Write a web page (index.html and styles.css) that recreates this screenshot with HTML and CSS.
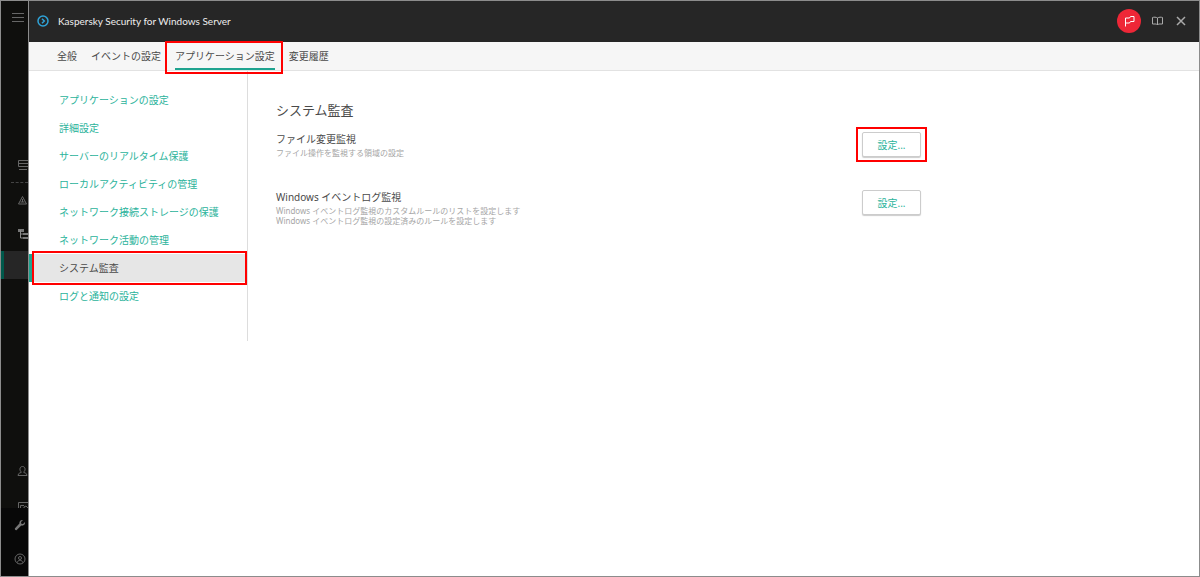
FILE: index.html
```html
<!DOCTYPE html>
<html lang="ja">

<head>
    <meta charset="utf-8">
    <meta name="viewport" content="width=device-width, initial-scale=1.0">
    <title>Kaspersky Security for Windows Server</title>
    <link rel="stylesheet" href="styles.css">
</head>

<body>
    <aside class="rail">
        <button class="rail-menu" aria-label="メニュー">
            <svg width="12" height="10" viewBox="0 0 12 10"><path d="M0 1.500h12M0 5.500h12M0 9.500h12" /></svg>
        </button>
        <div class="rail-top">
            <a href="#" aria-label="サーバー">
                <svg width="12" height="12" viewBox="0 0 12 12"><path d="M2.500 1.500h10v6h-10zM2 4.500h10M3 10.500h8" /></svg>
            </a>
            <hr>
            <a href="#" aria-label="警告">
                <svg width="12" height="12" viewBox="0 0 12 12"><path d="M6.500 2.500L10.500 10H2.500zM6.500 5v3M4.500 8h4" /></svg>
            </a>
            <a href="#" aria-label="デバイス">
                <svg class="bright" width="12" height="12" viewBox="0 0 12 12"><path class="fill" d="M2 1h6v3H2zM7 5h6v2H7zM7 9h6v2H7z" /><path d="M4.500 2v8H7M4.500 6H7" /></svg>
            </a>
            <a href="#" class="rail-active" aria-label="ポリシー"></a>
        </div>
        <div class="rail-users">
            <a href="#" aria-label="ユーザー">
                <svg width="12" height="12" viewBox="0 0 12 12"><path d="M6.500 1.500c3.500 0 3 5 1 5.500 0 1 3.500.5 3.500 3.500H2C2 7.500 5.500 8 5.500 7 3.500 6.500 3 1.500 6.500 1.500z" /></svg>
            </a>
            <a href="#" class="rail-cut" aria-label="レポート">
                <svg width="12" height="12" viewBox="0 0 12 12"><path d="M2.500 10V2.500H12M4.500 10V5.500H8M8 10V7l2-1 2 2" /></svg>
            </a>
        </div>
        <div class="rail-bottom">
            <a href="#" aria-label="設定">
                <svg width="12" height="12" viewBox="0 0 12 12"><path class="fill" d="M11 3L9 5 7.300 4.700 7 3l2-2C7 .5 5 2 5.400 4.600L1 9.300C.3 10.200 1.700 11.700 2.700 11l4.600-4.400C10 7 11.500 5 11 3z" /></svg>
            </a>
            <a href="#" aria-label="アカウント">
                <svg width="12" height="12" viewBox="0 0 12 12"><circle cx="6" cy="6" r="5" /><circle cx="6" cy="5" r="1.500" /><path d="M3.500 9.500C3.500 6.500 8.500 6.500 8.500 9.500" /></svg>
            </a>
        </div>
    </aside>

    <div class="panel">
        <header>
            <svg class="logo" width="12" height="12" viewBox="0 0 12 12"><circle cx="6" cy="6" r="5" /><path d="M5 3.800L7.300 6 5 8.200" /></svg>
            <h1>Kaspersky Security for Windows Server</h1>
            <button class="flag" aria-label="フラグ">
                <svg width="12" height="12" viewBox="0 0 12 12"><path d="M2.500 11.500V3h4l1-1.500h3.500v5H7.500L6.500 8h-4" /></svg>
            </button>
            <button class="tool" aria-label="ヘルプ">
                <svg width="12" height="12" viewBox="0 0 12 12"><path d="M6.500 3C5 2 3 2 1.500 2.500V9H5.500l1 1 1-1h4V2.500C10 2 8 2 6.500 3zM6.500 3v7" /></svg>
            </button>
            <button class="tool close" aria-label="閉じる">
                <svg width="12" height="12" viewBox="0 0 12 12"><path d="M2 2l8 8M10 2l-8 8" /></svg>
            </button>
        </header>

        <nav class="tabs">
            <a href="#">全般</a>
            <a href="#">イベントの設定</a>
            <a href="#" class="selected marked">アプリケーション設定</a>
            <a href="#">変更履歴</a>
        </nav>

        <div class="content">
            <nav class="menu">
                <a href="#">アプリケーションの設定</a>
                <a href="#">詳細設定</a>
                <a href="#">サーバーのリアルタイム保護</a>
                <a href="#">ローカルアクティビティの管理</a>
                <a href="#">ネットワーク接続ストレージの保護</a>
                <a href="#">ネットワーク活動の管理</a>
                <a href="#" class="selected marked">システム監査</a>
                <a href="#">ログと通知の設定</a>
            </nav>

            <main>
                <h2>システム監査</h2>
                <section class="setting">
                    <div>
                        <h3>ファイル変更監視</h3>
                        <p>ファイル操作を監視する領域の設定</p>
                    </div>
                    <button class="marked">設定...</button>
                </section>
                <section class="setting">
                    <div>
                        <h3>Windows イベントログ監視</h3>
                        <p>Windows イベントログ監視のカスタムルールのリストを設定します</p>
                        <p>Windows イベントログ監視の設定済みのルールを設定します</p>
                    </div>
                    <button>設定...</button>
                </section>
            </main>
        </div>
    </div>
</body>

</html>
```

FILE: styles.css
```css
* {
    box-sizing: border-box;
}

body {
    margin: 0;
    min-height: 100vh;
    display: flex;
    border: 1px solid #8c8c8c;
    background-color: white;
    color: #4a4a4a;
    font-family: "Noto Sans", "Noto Sans CJK JP", sans-serif;
    font-size: 10px;
    line-height: 16px;
}

h1, h2, h3, p {
    margin: 0;
    font-weight: 400;
}

a {
    text-decoration: none;
}

button {
    font: inherit;
    padding: 0;
    border: 0;
    background: none;
}

svg {
    display: block;
    flex: none;
    fill: none;
    stroke: #666666;
}

/* dark rail, partly covered by the panel */
.rail {
    width: 28px;
    flex: none;
    display: flex;
    flex-direction: column;
    overflow: hidden;
    background-color: #0f0f0d;
    border-right: 1px solid #8c8c8c;
}

.rail a {
    display: flex;
    align-items: center;
    height: 34px;
    padding-left: 15px;
}

.rail-menu {
    padding: 11px 0 0 11px;
}

.rail-top {
    margin-top: 126px;
}

.rail-top hr {
    margin: 0 0 0 10px;
    border: 0;
    border-top: 1px dashed #444444;
}

.rail .bright {
    stroke: #8c8c8c;
}

.rail .rail-active {
    height: 28px;
    background-color: #262626;
    border-left: 3px solid #00594b;
}

.rail-users {
    margin-top: auto;
}

.rail .rail-cut {
    height: 20px;
    align-items: flex-end;
    overflow: hidden;
}

.rail-cut svg {
    margin-bottom: -4px;
}

.rail-bottom {
    background-color: #080808;
}

.rail-bottom a {
    padding-left: 13px;
}

.fill {
    fill: #777777;
    stroke: none;
}

.panel {
    flex: 1;
    min-width: 0;
}

header {
    display: flex;
    align-items: center;
    height: 41px;
    padding: 0 12px 2px 8px;
    background-color: #262626;
    color: #eeeeee;
}

.logo {
    stroke: #2fa3d8;
    stroke-width: 1.5;
    margin-right: 9px;
}

h1 {
    font-family: Lato, sans-serif;
    font-size: 10px;
    margin-right: auto;
}

.flag {
    display: grid;
    place-items: center;
    width: 24px;
    height: 24px;
    margin-right: 10px;
    border-radius: 50%;
    background-color: #ee2737;
}

.flag svg {
    stroke: white;
}

.tool {
    margin-right: 12px;
}

.tool svg {
    stroke: #aaaaaa;
}

.close {
    margin-right: 0;
}

.close svg {
    stroke-width: 1.5;
}

.tabs {
    display: flex;
    gap: 14px;
    height: 29px;
    padding-left: 28px;
    background-color: #f6f6f6;
    border-bottom: 1px solid #e2e2e2;
}

.tabs a {
    height: 28px;
    line-height: 28px;
    color: #4a4a4a;
}

.tabs .selected {
    border-bottom: 2px solid #1fa38f;
}

/* red frames round the steps to follow */
.marked {
    position: relative;
}

.marked::after {
    content: "";
    position: absolute;
    z-index: 1;
    border: 2px solid #ff0000;
}

.tabs .marked::after {
    inset: -1px -8px -6px -10px;
}

.content {
    display: flex;
}

.menu {
    width: 219px;
    flex: none;
    padding: 15px 0 31px;
    border-right: 1px solid #dddddd;
}

.menu a {
    display: block;
    height: 28px;
    padding-left: 30px;
    line-height: 28px;
    color: #2bb39b;
}

.menu .selected {
    color: #4a4a4a;
    background-color: #e6e6e6;
    border-left: 3px solid #1fa38f;
    padding-left: 27px;
}

.menu .marked::after {
    inset: -3px 0;
}

main {
    flex: 1;
    max-width: 673px;
    padding: 29px 0 0 28px;
}

h2 {
    font-size: 13px;
    line-height: 20px;
    margin-bottom: 12px;
}

.setting {
    display: flex;
    align-items: flex-start;
    justify-content: space-between;
    min-height: 58px;
}

h3 {
    font-size: 10px;
    line-height: 14px;
    margin-bottom: 2px;
}

.setting p {
    font-size: 8px;
    line-height: 10px;
    color: #a6a6a6;
}

.setting button {
    width: 59px;
    height: 25px;
    border: 1px solid #cccccc;
    border-radius: 2px;
    background-color: white;
    box-shadow: 0 1px 1px #cccccc;
    color: #2bb39b;
}

.setting .marked::after {
    inset: -6px -7px;
}
```
